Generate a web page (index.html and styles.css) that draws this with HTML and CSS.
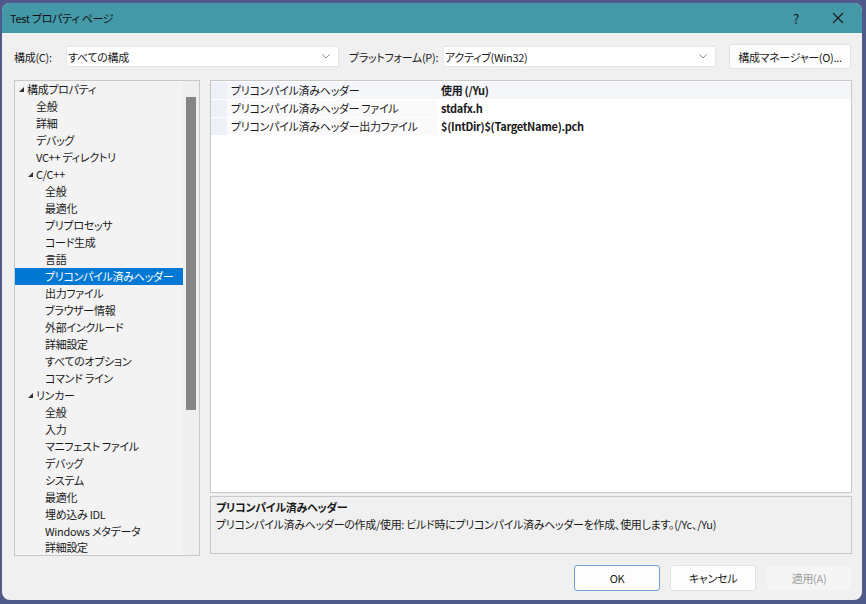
FILE: index.html
```html
<!DOCTYPE html>
<html lang="ja">
<head>
<meta charset="utf-8">
<link rel="stylesheet" href="styles.css">
</head>
<body>
<div class="window">
  <div class="titlebar">
    <span class="title">Test プロパティ ページ</span>
    <span class="tb-help">?</span>
    <span class="tb-close"><svg width="12" height="12" viewBox="0 0 12 12"><path d="M1 1L11 11M11 1L1 11" stroke="#1a1a1a" stroke-width="1.1" fill="none"/></svg></span>
  </div>
  <div class="content">
    <div class="toolbar">
      <span class="lbl">構成(C):</span>
      <div class="combo combo-conf"><span>すべての構成</span><svg class="chev" width="8" height="5" viewBox="0 0 8 5"><path d="M0.5 0.5L4 4L7.5 0.5" stroke="#8a8a8a" fill="none"/></svg></div>
      <span class="lbl lbl-plat">プラットフォーム(P):</span>
      <div class="combo combo-plat"><span>アクティブ(Win32)</span><svg class="chev" width="8" height="5" viewBox="0 0 8 5"><path d="M0.5 0.5L4 4L7.5 0.5" stroke="#8a8a8a" fill="none"/></svg></div>
      <button class="btn btn-mgr">構成マネージャー(O)...</button>
    </div>
    <div class="main">
      <div class="tree">
        <div class="tree-list">
          <div class="row l0"><span class="tg"><svg width="5" height="5" viewBox="0 0 5 5"><path d="M5 0L5 5L0 5Z" fill="#333"/></svg></span>構成プロパティ</div>
          <div class="row l1"><span class="tg"></span>全般</div>
          <div class="row l1"><span class="tg"></span>詳細</div>
          <div class="row l1"><span class="tg"></span>デバッグ</div>
          <div class="row l1"><span class="tg"></span>VC++ ディレクトリ</div>
          <div class="row l1"><span class="tg"><svg width="5" height="5" viewBox="0 0 5 5"><path d="M5 0L5 5L0 5Z" fill="#333"/></svg></span>C/C++</div>
          <div class="row l2"><span class="tg"></span>全般</div>
          <div class="row l2"><span class="tg"></span>最適化</div>
          <div class="row l2"><span class="tg"></span>プリプロセッサ</div>
          <div class="row l2"><span class="tg"></span>コード生成</div>
          <div class="row l2"><span class="tg"></span>言語</div>
          <div class="row l2 sel"><span class="tg"></span>プリコンパイル済みヘッダー</div>
          <div class="row l2"><span class="tg"></span>出力ファイル</div>
          <div class="row l2"><span class="tg"></span>ブラウザー情報</div>
          <div class="row l2"><span class="tg"></span>外部インクルード</div>
          <div class="row l2"><span class="tg"></span>詳細設定</div>
          <div class="row l2"><span class="tg"></span>すべてのオプション</div>
          <div class="row l2"><span class="tg"></span>コマンド ライン</div>
          <div class="row l1"><span class="tg"><svg width="5" height="5" viewBox="0 0 5 5"><path d="M5 0L5 5L0 5Z" fill="#333"/></svg></span>リンカー</div>
          <div class="row l2"><span class="tg"></span>全般</div>
          <div class="row l2"><span class="tg"></span>入力</div>
          <div class="row l2"><span class="tg"></span>マニフェスト ファイル</div>
          <div class="row l2"><span class="tg"></span>デバッグ</div>
          <div class="row l2"><span class="tg"></span>システム</div>
          <div class="row l2"><span class="tg"></span>最適化</div>
          <div class="row l2"><span class="tg"></span>埋め込み IDL</div>
          <div class="row l2"><span class="tg"></span>Windows メタデータ</div>
          <div class="row l2 last"><span class="tg"></span>詳細設定</div>
        </div>
        <div class="vscroll"><div class="thumb"></div></div>
      </div>
      <div class="right">
        <div class="grid">
          <div class="prow active"><span class="gut"></span><span class="pname">プリコンパイル済みヘッダー</span><span class="pval">使用 (/Yu)</span></div>
          <div class="prow"><span class="gut"></span><span class="pname">プリコンパイル済みヘッダー ファイル</span><span class="pval">stdafx.h</span></div>
          <div class="prow"><span class="gut"></span><span class="pname">プリコンパイル済みヘッダー出力ファイル</span><span class="pval">$(IntDir)$(TargetName).pch</span></div>
          <div class="gfill"><span class="gut"></span></div>
        </div>
        <div class="desc">
          <div class="desc-title">プリコンパイル済みヘッダー</div>
          <div class="desc-text">プリコンパイル済みヘッダーの作成/使用: ビルド時にプリコンパイル済みヘッダーを作成、使用します。(/Yc、/Yu)</div>
        </div>
      </div>
    </div>
    <div class="buttons">
      <button class="btn btn-ok">OK</button>
      <button class="btn">キャンセル</button>
      <button class="btn btn-dis">適用(A)</button>
    </div>
  </div>
</div>
</body>
</html>
```

FILE: styles.css
```css
html, body {
  margin: 0;
  padding: 0;
  background: #4f5a8a;
  width: 866px;
  height: 604px;
  overflow: hidden;
}
body {
  font-family: "Noto Sans CJK JP", "Noto Sans", sans-serif;
  font-size: 11px;
  letter-spacing: -0.3px;
  color: #1a1a1a;
  font-feature-settings: "palt";
}
.window {
  margin: 3px 0 0 2px;
  width: 860px;
  height: 597px;
  background: #f0f0f0;
  border-radius: 8px;
  overflow: hidden;
  display: flex;
  flex-direction: column;
}
.titlebar {
  height: 30px;
  flex: none;
  background: #4499a9;
  display: flex;
  align-items: center;
  padding-left: 8px;
}
.title {
  flex: 1;
  line-height: 16px;
  color: #111;
}
.tb-help {
  width: 20px;
  text-align: center;
  font-size: 13px;
  margin-right: 26px;
}
.tb-close {
  width: 12px;
  height: 12px;
  margin-right: 18px;
  display: flex;
}
.content {
  padding: 11px 10px 0 12px;
  flex: 1;
  display: flex;
  flex-direction: column;
}
.toolbar {
  display: flex;
  align-items: center;
  height: 25px;
}
.lbl {
  line-height: 16px;
  width: 52px;
  flex: none;
  white-space: nowrap;
}
.lbl-plat {
  margin-left: 10px;
  width: 94px;
}
.combo {
  width: 273px;
  flex: none;
  height: 21px;
  box-sizing: border-box;
  background: #fff;
  border: 1px solid #e6e6e6;
  display: flex;
  align-items: center;
  padding-left: 1px;
  padding-right: 8px;
  line-height: 16px;
}
.combo span {
  flex: 1;
}
.chev {
  flex: none;
}
.btn {
  font-family: inherit;
  font-size: 11px;
  letter-spacing: -0.3px;
  font-feature-settings: "palt";
  color: #1a1a1a;
  background: #fdfdfd;
  border: 1px solid #e2e2e2;
  border-radius: 3px;
  height: 26px;
  width: 86px;
  padding: 0;
  line-height: 16px;
}
.btn-mgr {
  margin-left: 13px;
  width: 122px;
  height: 25px;
  flex: none;
}
.main {
  margin-top: 11px;
  display: flex;
  gap: 10px;
  height: 476px;
}
.tree {
  width: 186px;
  flex: none;
  box-sizing: border-box;
  border: 1px solid #c8c8c8;
  background: #f3f3f3;
  display: flex;
  overflow: hidden;
}
.tree-list {
  flex: 1;
  overflow: hidden;
}
.row {
  height: 17px;
  line-height: 17px;
  display: flex;
  align-items: center;
  white-space: nowrap;
  color: #1a1a1a;
}
.row.l0 { padding-left: 4px; }
.row.l1 { padding-left: 13px; }
.row.l2 { padding-left: 22px; }
.row.last {
  height: 15px;
  align-items: flex-start;
  line-height: 15px;
}
.tg {
  width: 8px;
  flex: none;
  display: flex;
  align-items: center;
  height: 17px;
}
.row.sel {
  background: #0078d4;
  color: #fff;
}
.vscroll {
  width: 16px;
  flex: none;
  background: #efefef;
}
.thumb {
  margin: 16px 0 0 3px;
  width: 10px;
  height: 313px;
  background: #868686;
}
.right {
  width: 642px;
  flex: none;
  display: flex;
  flex-direction: column;
  gap: 3px;
}
.grid {
  height: 413px;
  box-sizing: border-box;
  border: 1px solid #c8c8c8;
  background: #fff;
  display: flex;
  flex-direction: column;
  padding-top: 1px;
}
.prow {
  display: flex;
  height: 17px;
  line-height: 17px;
  border-bottom: 1px solid #fff;
  background: #fafafa;
}
.prow.active {
  background: #f4f6fa;
}
.gut {
  width: 16px;
  flex: none;
  background: #eef2f8;
}
.pname {
  width: 206px;
  padding-left: 4px;
  flex: none;
  white-space: nowrap;
  overflow: hidden;
}
.pval {
  flex: 1;
  padding-left: 4px;
  font-weight: bold;
  background: #fff;
  white-space: nowrap;
}
.prow.active .pval {
  background: #f4f6fa;
}
.gfill {
  flex: 1;
  display: flex;
}
.gfill .gut {
  background: #fff;
}
.desc {
  height: 58px;
  box-sizing: border-box;
  border: 1px solid #c8c8c8;
  background: #f0f0f0;
  padding: 2px 5px;
}
.desc-title {
  font-weight: bold;
  line-height: 17px;
}
.desc-text {
  line-height: 17px;
}
.buttons {
  margin-top: 9px;
  display: flex;
  justify-content: flex-end;
  gap: 10px;
}
.btn-ok {
  border-color: #6ea3d8;
}
.btn-dis {
  color: #a0a0a0;
  background: #f5f5f5;
  border-color: #f0f0f0;
}
```
